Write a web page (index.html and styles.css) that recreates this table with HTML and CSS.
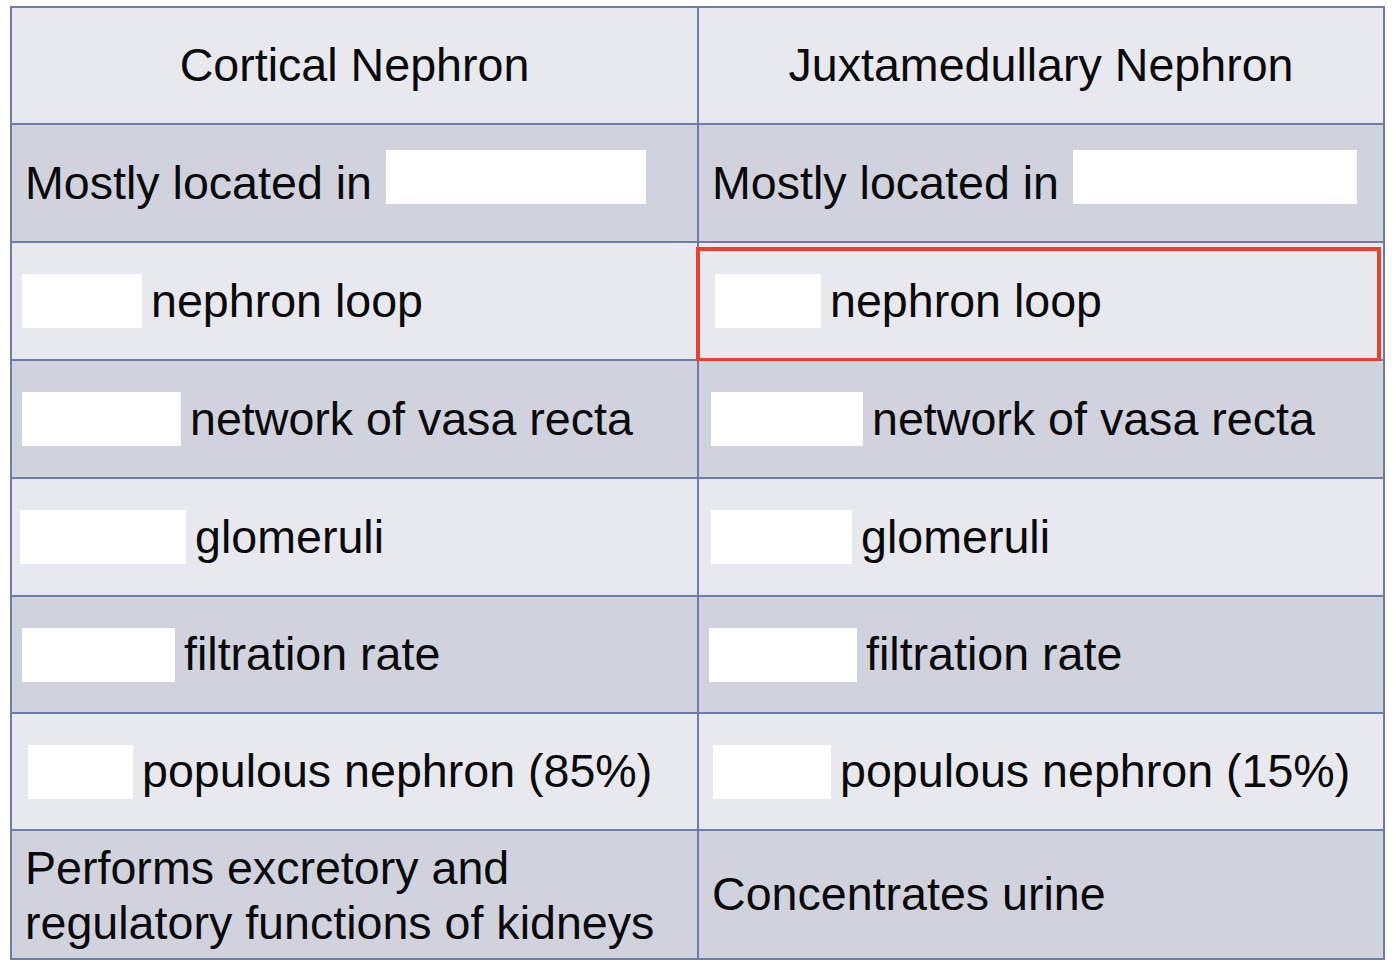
FILE: index.html
```html
<!DOCTYPE html>
<html>
<head>
<meta charset="utf-8">
<link rel="stylesheet" href="styles.css">
</head>
<body>
<div class="table">
  <div class="cell light head">Cortical Nephron</div>
  <div class="cell light head">Juxtamedullary Nephron</div>

  <div class="cell dark"><span class="txt">Mostly located in</span><span class="blank after" style="--w:260px"></span></div>
  <div class="cell dark"><span class="txt">Mostly located in</span><span class="blank after" style="--w:284px"></span></div>

  <div class="cell light"><span class="blank" style="--x:10px;--w:120px"></span><span class="txt">nephron loop</span></div>
  <div class="cell light highlighted"><span class="blank" style="--x:16px;--w:106px"></span><span class="txt">nephron loop</span><span class="redbox"></span></div>

  <div class="cell dark"><span class="blank" style="--x:10px;--w:159px"></span><span class="txt">network of vasa recta</span></div>
  <div class="cell dark"><span class="blank" style="--x:12px;--w:152px"></span><span class="txt">network of vasa recta</span></div>

  <div class="cell light"><span class="blank" style="--x:8px;--w:166px"></span><span class="txt">glomeruli</span></div>
  <div class="cell light"><span class="blank" style="--x:12px;--w:141px"></span><span class="txt">glomeruli</span></div>

  <div class="cell dark"><span class="blank" style="--x:10px;--w:153px"></span><span class="txt">filtration rate</span></div>
  <div class="cell dark"><span class="blank" style="--x:10px;--w:148px"></span><span class="txt">filtration rate</span></div>

  <div class="cell light"><span class="blank" style="--x:16px;--w:105px"></span><span class="txt">populous nephron (85%)</span></div>
  <div class="cell light"><span class="blank" style="--x:14px;--w:118px"></span><span class="txt">populous nephron (15%)</span></div>

  <div class="cell dark multi"><span class="txt">Performs excretory and<br>regulatory functions of kidneys</span></div>
  <div class="cell dark"><span class="txt">Concentrates urine</span></div>
</div>
</body>
</html>
```
FILE: styles.css
```css
html, body {
  margin: 0;
  padding: 0;
  background: #ffffff;
}

body {
  padding: 6px 0 0 10px;
  font-family: "Liberation Sans", Arial, sans-serif;
  color: #0a0a0a;
}

.table {
  display: grid;
  width: 1375px;
  box-sizing: border-box;
  grid-template-columns: 685px 684px;
  grid-template-rows: 115px 116px 116px 116px 116px 115px 115px 127px;
  gap: 2px;
  padding: 2px;
  background: #6c7cab;
}

.cell {
  position: relative;
  display: flex;
  align-items: center;
  padding-left: 13px;
  font-size: 46.6px;
  line-height: 55px;
  white-space: nowrap;
}

.light { background: #e8e9ee; }
.dark { background: #d0d3dd; }

.head {
  justify-content: center;
  padding-left: 0;
}

.blank {
  display: block;
  flex: none;
  width: var(--w);
  height: 54px;
  margin-left: calc(var(--x) - 13px);
  margin-right: 9px;
  background: #ffffff;
}

.blank.after {
  margin-left: 14px;
  margin-right: 0;
  margin-bottom: 12px;
}

.multi {
  padding-top: 2px;
}

.redbox {
  position: absolute;
  left: -3px;
  top: 4px;
  right: 2px;
  bottom: -3px;
  border: 4px solid #e8412c;
}
```
